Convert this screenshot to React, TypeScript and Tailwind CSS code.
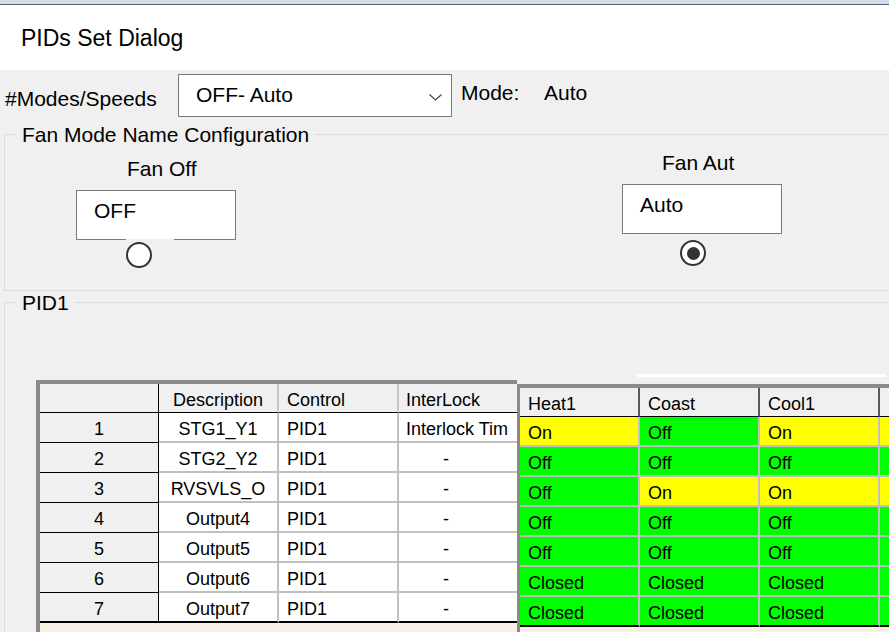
import React from 'react';

type Cell = 'On' | 'Off' | 'Closed';

const LEFT_ROWS = [
  { n: 1, desc: 'STG1_Y1', ctrl: 'PID1', lock: 'Interlock Tim' },
  { n: 2, desc: 'STG2_Y2', ctrl: 'PID1', lock: '-' },
  { n: 3, desc: 'RVSVLS_O', ctrl: 'PID1', lock: '-' },
  { n: 4, desc: 'Output4', ctrl: 'PID1', lock: '-' },
  { n: 5, desc: 'Output5', ctrl: 'PID1', lock: '-' },
  { n: 6, desc: 'Output6', ctrl: 'PID1', lock: '-' },
  { n: 7, desc: 'Output7', ctrl: 'PID1', lock: '-' },
];

const RIGHT_HEAD = ['Heat1', 'Coast', 'Cool1', ''];

// last column is cut off by the window edge, only its colour shows
const RIGHT_ROWS: Cell[][] = [
  ['On', 'Off', 'On', 'On'],
  ['Off', 'Off', 'Off', 'Off'],
  ['Off', 'On', 'On', 'On'],
  ['Off', 'Off', 'Off', 'Off'],
  ['Off', 'Off', 'Off', 'Off'],
  ['Closed', 'Closed', 'Closed', 'Closed'],
  ['Closed', 'Closed', 'Closed', 'Closed'],
];

function Radio({ checked = false }: { checked?: boolean }) {
  return (
    <span className="flex h-[26px] w-[26px] items-center justify-center rounded-full border-2 border-[#333333] bg-white">
      {checked && <span className="h-[13px] w-[13px] rounded-full bg-[#333333]" />}
    </span>
  );
}

function LeftGrid() {
  return (
    <div className="flex h-[260px] w-[481px] shrink-0 flex-col border-l-4 border-t-4 border-[#8a8a8a] bg-[#f8efe5] text-[18px] leading-[18px]">
      {/* Header */}
      <div className="flex h-[29px] bg-[#f0f0f0]">
        <div className="h-[29px] w-[119px] border-b border-r border-black" />
        <div className="h-[29px] w-[120px] border-b border-r-2 border-b-black border-r-[#c8c8c8] pt-[7px] text-center">
          Description
        </div>
        <div className="h-[29px] w-[120px] border-b border-r-2 border-b-black border-r-[#c8c8c8] pl-[8px] pt-[7px]">
          Control
        </div>
        <div className="h-[29px] w-[118px] border-b border-black pl-[7px] pt-[7px]">InterLock</div>
      </div>

      {LEFT_ROWS.map((r, i) => {
        const last = i === LEFT_ROWS.length - 1;
        const bottom = last ? 'border-b-2 border-b-black' : 'border-b-2 border-b-[#c0c0c0]';
        return (
          <div key={r.n} className="flex h-[30px]">
            <div
              className={`h-[30px] w-[119px] border-r border-r-black bg-[#f0f0f0] pt-[7px] text-center ${
                last ? 'border-b-2 border-b-black' : 'border-b border-b-black'
              }`}
            >
              {r.n}
            </div>
            <div className={`h-[30px] w-[120px] border-r-2 border-r-[#c0c0c0] bg-white pt-[7px] text-center ${bottom}`}>
              {r.desc}
            </div>
            <div className={`h-[30px] w-[120px] border-r-2 border-r-[#c0c0c0] bg-white pl-[8px] pt-[7px] ${bottom}`}>
              {r.ctrl}
            </div>
            <div
              className={`h-[30px] w-[118px] overflow-hidden whitespace-nowrap bg-white pt-[7px] ${
                r.lock === '-' ? 'pl-[44px]' : 'pl-[7px]'
              } ${bottom}`}
            >
              {r.lock}
            </div>
          </div>
        );
      })}
    </div>
  );
}

function RightGrid() {
  return (
    <div className="mt-[4px] flex h-[260px] w-[500px] shrink-0 flex-col border-l-[3px] border-t-4 border-[#8a8a8a] bg-[#f8efe5] text-[18px] leading-[18px]">
      <div className="flex h-[29px] bg-[#f0f0f0]">
        {RIGHT_HEAD.map((h, i) => (
          <div
            key={i}
            className="h-[29px] w-[120px] shrink-0 border-b border-r-2 border-b-black border-r-[#5a5a5a] pl-[8px] pt-[7px]"
          >
            {h}
          </div>
        ))}
      </div>

      {RIGHT_ROWS.map((row, i) => {
        const last = i === RIGHT_ROWS.length - 1;
        return (
          <div key={i} className="flex h-[30px]">
            {row.map((v, j) => (
              <div
                key={j}
                className={`h-[30px] w-[120px] shrink-0 overflow-hidden whitespace-nowrap border-r-2 border-r-[#c0c0c0] pl-[8px] pt-[7px] ${
                  v === 'On' ? 'bg-[#ffff00]' : 'bg-[#00ff00]'
                } ${last ? 'border-b-2 border-b-black' : 'border-b-2 border-b-[#c0c0c0]'}`}
              >
                {j < 3 ? v : null}
              </div>
            ))}
          </div>
        );
      })}
    </div>
  );
}

export default function App() {
  return (
    <div className="h-[632px] w-[889px] overflow-hidden bg-[#f0f0f0] font-['Liberation_Sans',Arial,sans-serif] text-black">
      {/* Window top edge */}
      <div className="h-[4px] bg-[#cfdbe8]" />
      <div className="h-[1px] bg-[#5d6772]" />

      {/* Title */}
      <div className="h-[65px] bg-white pl-[21px] pt-[22px] text-[23px] leading-none">PIDs Set Dialog</div>

      {/* Modes / Speeds */}
      <div className="flex h-[54px] items-start text-[21px] leading-none">
        <span className="ml-[5px] mt-[18px] w-[173px] shrink-0">#Modes/Speeds</span>
        <div className="mt-[4px] flex h-[43px] w-[274px] shrink-0 items-start border border-[#7a7a7a] bg-white pl-[17px] pt-[9px]">
          <span className="flex-1">OFF- Auto</span>
          <svg className="mr-[9px] mt-[10px]" width="13" height="7" viewBox="0 0 13 7" fill="none">
            <polyline points="0.5,0.5 6.5,6 12.5,0.5" stroke="#444" strokeWidth="1.2" />
          </svg>
        </div>
        <span className="ml-[9px] mt-[12px] w-[83px] shrink-0">Mode:</span>
        <span className="mt-[12px]">Auto</span>
      </div>

      {/* Fan Mode Name Configuration */}
      <fieldset className="ml-[4px] h-[167px] w-[900px] border border-[#dcdcdc] text-[21px] leading-none">
        <legend className="ml-[12px] px-[5px]">Fan Mode Name Configuration</legend>
        <div className="flex items-start">
          <div className="ml-[71px] mt-[13px] flex w-[160px] shrink-0 flex-col">
            <span className="ml-[51px]">Fan Off</span>
            <div className="mt-[11px] h-[50px] border border-[#7a7a7a] bg-white pl-[17px] pt-[9px]">OFF</div>
            <div className="-mt-[1px] ml-[50px] flex h-[32px] w-[48px] items-center bg-[#f0f0f0]">
              <Radio />
            </div>
          </div>

          <div className="ml-[386px] mt-[7px] flex w-[160px] shrink-0 flex-col">
            <span className="ml-[40px]">Fan Aut</span>
            <div className="mt-[11px] h-[50px] border border-[#7a7a7a] bg-white pl-[17px] pt-[9px]">Auto</div>
            <div className="ml-[58px] mt-[6px]">
              <Radio checked />
            </div>
          </div>
        </div>
      </fieldset>

      {/* PID1 */}
      <fieldset className="ml-[4px] mt-[1px] h-[400px] w-[900px] border border-[#dcdcdc] text-[21px] leading-none">
        <legend className="ml-[12px] px-[5px]">PID1</legend>
        <div className="ml-[632px] mt-[61px] h-[3px] w-[249px] bg-white" />
        <div className="ml-[31px] mt-[3px] flex items-start">
          <LeftGrid />
          <RightGrid />
        </div>
      </fieldset>
    </div>
  );
}
